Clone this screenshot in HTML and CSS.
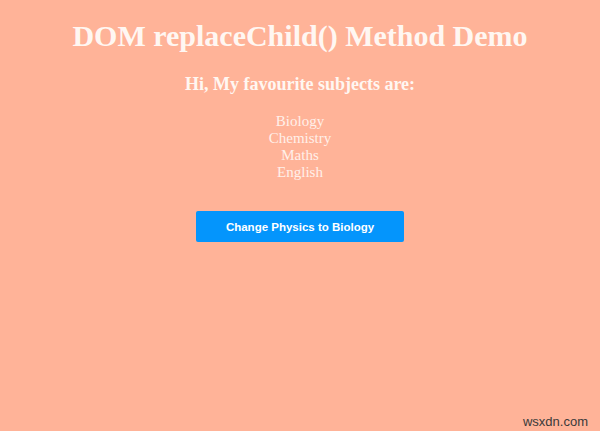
FILE: index.html
```html
<!DOCTYPE html>
<html lang="en">
<head>
  <meta charset="UTF-8">
  <title>DOM replaceChild() Method Demo</title>
  <link rel="stylesheet" href="styles.css">
</head>
<body>

  <h1>DOM replaceChild() Method Demo</h1>
  <h3>Hi, My favourite subjects are:</h3>

  <div class="subjects" id="subjects">
    <div>Biology</div>
    <div>Chemistry</div>
    <div>Maths</div>
    <div>English</div>
  </div>

  <button class="btn" id="swap">Change Physics to Biology</button>

  <div class="mark">wsxdn.com</div>

</body>
</html>
```

FILE: styles.css
```css
body {
  margin: 0;
  padding-top: 18px;
  height: 413px;
  background: #ffb398;
  font-family: "Liberation Serif", "Times New Roman", serif;
  color: #fff7f2;
  text-align: center;
  position: relative;
  overflow: hidden;
}

h1 {
  font-size: 30px;
  margin: 0 0 19px;
  line-height: 36px;
}

h3 {
  font-size: 18px;
  margin: 0 0 18px;
  line-height: 22px;
}

.subjects {
  font-size: 15px;
  line-height: 17px;
  color: #fff0ea;
}

.btn {
  display: block;
  margin: 30px auto 0;
  width: 208px;
  height: 31px;
  background: #0495fc;
  color: #fff;
  border: none;
  border-radius: 2px;
  font-family: "Liberation Sans", Arial, sans-serif;
  font-weight: bold;
  font-size: 11.5px;
}

.mark {
  position: absolute;
  right: 12px;
  bottom: 2px;
  font-family: "Liberation Sans", Arial, sans-serif;
  font-size: 13px;
  color: #3a3a3a;
}
```
